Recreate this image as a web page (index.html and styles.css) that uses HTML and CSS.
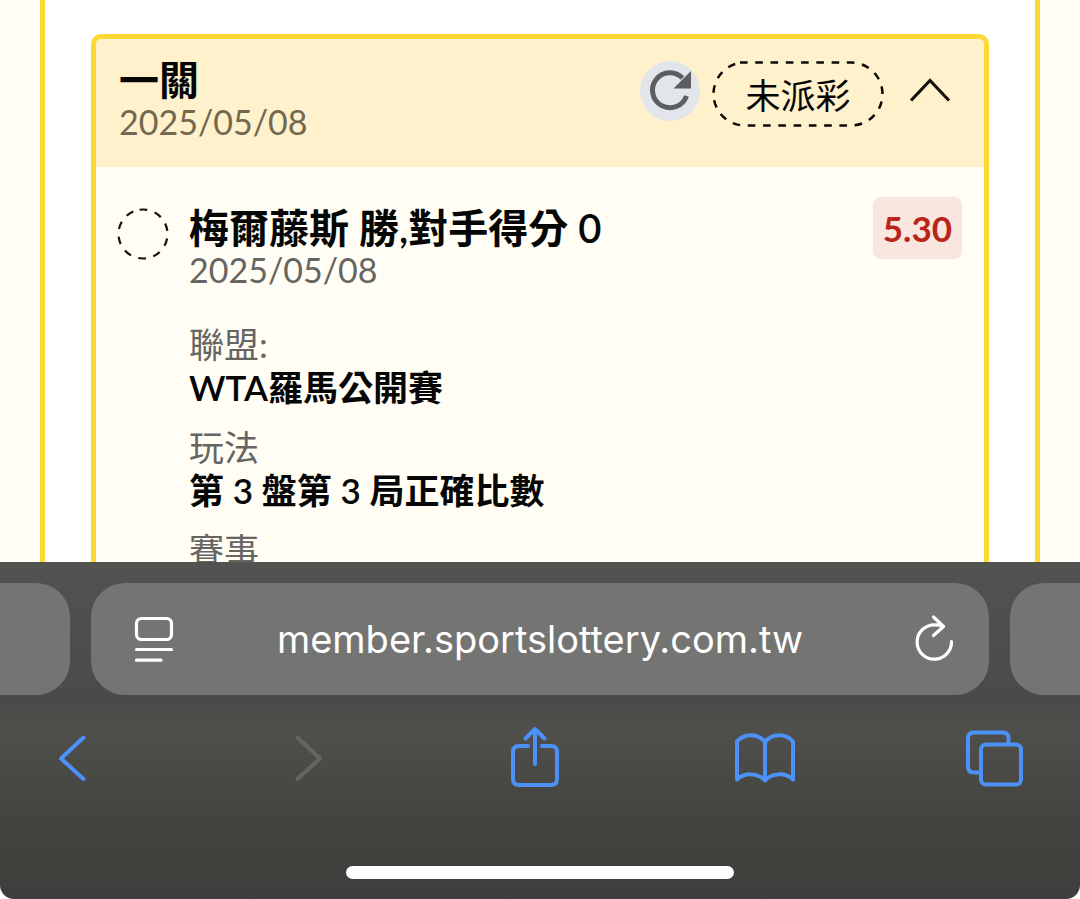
FILE: index.html
```html
<!DOCTYPE html>
<html lang="zh-Hant">
<head>
<meta charset="utf-8">
<meta name="viewport" content="width=device-width, initial-scale=1">
<title>member.sportslottery.com.tw</title>
<link rel="stylesheet" href="styles.css">
</head>
<body>
<div class="screen">
  <main class="page">
    <div class="frame">
      <article class="bet">
        <header class="bet-header">
          <div class="heading">
            <h1 class="title">一關</h1>
            <time class="date">2025/05/08</time>
          </div>
          <div class="status">
            <button class="replay" type="button" aria-label="重新整理">
              <svg viewBox="0 0 60 60" width="60" height="60"><path d="M46.500 35A17.500 17.500 0 1 1 42.500 17" fill="none" stroke="#5c5e61" stroke-width="5"/><path d="M51 10v17.500H33.500Z" fill="#5c5e61"/></svg>
            </button>
            <span class="pill">
              <svg class="pill-outline" viewBox="0 0 172 66" width="172" height="66"><path d="M28 1.5H139A31.500 31.500 0 0 1 139 64.500H33A31.500 31.500 0 0 1 33 1.500Z" fill="none" stroke="#0b0905" stroke-width="2.500" stroke-dasharray="7.600 7.670"/></svg>
              未派彩
            </span>
            <button class="toggle" type="button" aria-label="收合">
              <svg viewBox="0 0 44 30" width="44" height="30"><path d="M3 24.500 22 4.500 41 24.500" fill="none" stroke="#15120c" stroke-width="3.200"/></svg>
            </button>
          </div>
        </header>
        <section class="bet-body">
          <svg class="pending" viewBox="0 0 52 52" width="52" height="52"><circle cx="26" cy="26" r="24.500" fill="none" stroke="#111" stroke-width="2.200" stroke-dasharray="7.700 7.694" transform="rotate(-98 26 26)"/></svg>
          <div class="detail">
            <h2 class="title">梅爾藤斯 勝,對手得分 0</h2>
            <time class="date">2025/05/08</time>
            <dl class="facts">
              <div class="fact"><dt>聯盟:</dt><dd>WTA羅馬公開賽</dd></div>
              <div class="fact"><dt>玩法</dt><dd>第 3 盤第 3 局正確比數</dd></div>
              <div class="fact"><dt>賽事</dt></div>
            </dl>
          </div>
          <span class="odds">5.30</span>
        </section>
      </article>
    </div>
  </main>
  <footer class="browser">
    <div class="tabs">
      <div class="tab tab-prev"></div>
      <div class="tab tab-current">
        <button class="tab-button" type="button" aria-label="網頁選項">
          <svg viewBox="0 0 40 48" width="40" height="48" fill="none" stroke="#fff" stroke-width="3.200" stroke-linecap="round"><rect x="2.500" y="3.500" width="35" height="21" rx="5"/><path d="M2.500 34.500h35M2.500 45.200h24.500"/></svg>
        </button>
        <input class="address" type="text" aria-label="網址" value="member.sportslottery.com.tw" readonly>
        <button class="tab-button" type="button" aria-label="重新載入">
          <svg viewBox="0 0 40 48" width="40" height="48" fill="none" stroke="#fff" stroke-width="3.200" stroke-linecap="round" stroke-linejoin="round"><path d="M36.500 26.500A17.200 17.200 0 1 1 19.300 9.800c3.500 0 6 .3 9 1.200M18.500 2 28.500 11.500l-10 9"/></svg>
        </button>
      </div>
      <div class="tab tab-next"></div>
    </div>
    <nav class="toolbar">
      <button type="button" aria-label="上一頁"><svg viewBox="0 0 60 64" width="60" height="64"><path d="M38.500 11.500 16 32.500 38.500 53"/></svg></button>
      <button type="button" aria-label="下一頁" disabled><svg viewBox="0 0 60 64" width="60" height="64"><path d="M22.500 11.500 45 32.500 22.500 53"/></svg></button>
      <button type="button" aria-label="分享"><svg viewBox="0 0 60 64" width="60" height="64"><path d="M23 20h-9q-6 0-6 6v27q0 6 6 6h32q6 0 6-6V26q0-6-6-6h-9M30 38V4M20.500 12.500 30 3l9.500 9.500"/></svg></button>
      <button type="button" aria-label="書籤"><svg viewBox="0 0 60 64" width="60" height="64"><path d="M30 16C23 7 9 7 2 15.500V53.500C9 46.500 23 46.500 30 54.500C37 46.500 51 46.500 58 53.500V15.500C51 7 37 7 30 16V54"/></svg></button>
      <button type="button" aria-label="分頁"><svg viewBox="0 0 60 64" width="60" height="64"><rect x="16" y="18.500" width="40" height="40" rx="5"/><path d="M43.500 18.500v-6q0-6-6-6H9q-6 0-6 6v28q0 6 6 6h7"/></svg></button>
    </nav>
    <div class="home"></div>
  </footer>
</div>
</body>
</html>
```
FILE: styles.css
```css
* { box-sizing: border-box; }

body {
  margin: 0;
  background: #fff;
  color: #060606;
  font-family: Lato, "Noto Sans CJK TC", sans-serif;
  font-size: 35px;
  line-height: 42px;
}

h1, h2, dl, dd { margin: 0; }

button {
  display: grid;
  place-items: center;
  padding: 0;
  border: 0;
  background: none;
}

svg { display: block; }

.screen {
  display: flex;
  flex-direction: column;
  height: 100vh;
}

.page {
  flex: 1;
  min-height: 0;
  overflow: hidden;
  background: #fffdf4;
}

.frame {
  min-height: 100%;
  margin: 0 40px;
  padding: 34px 46px 0;
  border: solid #fdd835;
  border-width: 0 5px;
  background: #fff;
}

.bet {
  border: 5px solid #fdd835;
  border-radius: 10px;
  background: #fffdf4;
}

.bet-header {
  display: flex;
  justify-content: space-between;
  align-items: flex-start;
  min-height: 128px;
  padding: 20px 32px 22px 23px;
  border-radius: 5px 5px 0 0;
  background: #fef1cc;
}

.title {
  font-size: 40px;
  line-height: 42px;
  font-weight: 600;
}

.date {
  display: block;
  color: #666562;
  font-size: 34px;
}

.bet-header .date { color: #71684f; }

.status {
  display: flex;
  align-items: flex-start;
  gap: 12px;
  padding-top: 2px;
}

.replay {
  border-radius: 50%;
  background: #e2e5e9;
}

.pill {
  position: relative;
  display: grid;
  place-items: center;
  width: 172px;
  height: 66px;
  padding-top: 2px;
}

.pill-outline {
  position: absolute;
  inset: 0;
}

.toggle { margin: 15px 0 0 12px; }

.bet-body {
  display: flex;
  align-items: flex-start;
  padding: 30px 22px 24px 21px;
}

.pending { margin-top: 11px; }

.detail {
  flex: 1;
  margin-left: 20px;
  padding-top: 10px;
}

.facts {
  display: grid;
  gap: 17px;
  margin-top: 32px;
  line-height: 43px;
}

dt { color: #666562; }
dd { font-weight: 600; }

.odds {
  padding: 10px;
  border-radius: 8px;
  background: #f8e6df;
  color: #b92519;
  font-weight: 700;
}

.browser {
  padding: 21px 0 20px;
  border-radius: 0 0 14px 14px;
  background: linear-gradient(#525251 0, #4a4a49 40%, #4f4f4b 50%, #434340 76%, #3f3e3c 100%);
}

.tabs {
  display: flex;
  gap: 21px;
  height: 112px;
}

.tab { background: #747473; }

.tab-prev {
  width: 70px;
  border-radius: 0 34px 34px 0;
}

.tab-next {
  width: 70px;
  border-radius: 34px 0 0 34px;
}

.tab-current {
  display: flex;
  flex: 1;
  align-items: center;
  min-width: 0;
  padding: 0 34px 0 43px;
  border-radius: 34px;
}

.address {
  flex: 1;
  min-width: 0;
  margin-right: 9px;
  border: 0;
  background: none;
  color: #fff;
  font: 38px/48px Inter, sans-serif;
  text-align: center;
}

.toolbar {
  display: flex;
  justify-content: space-between;
  margin-top: 31px;
  padding: 0 55px 0 45px;
  fill: none;
  stroke: #4c91f7;
  stroke-width: 4;
  stroke-linecap: round;
  stroke-linejoin: round;
}

.toolbar button:disabled { stroke: #656563; }

.home {
  width: 36%;
  height: 13px;
  margin: 76px auto 0;
  border-radius: 7px;
  background: #fff;
}
```
